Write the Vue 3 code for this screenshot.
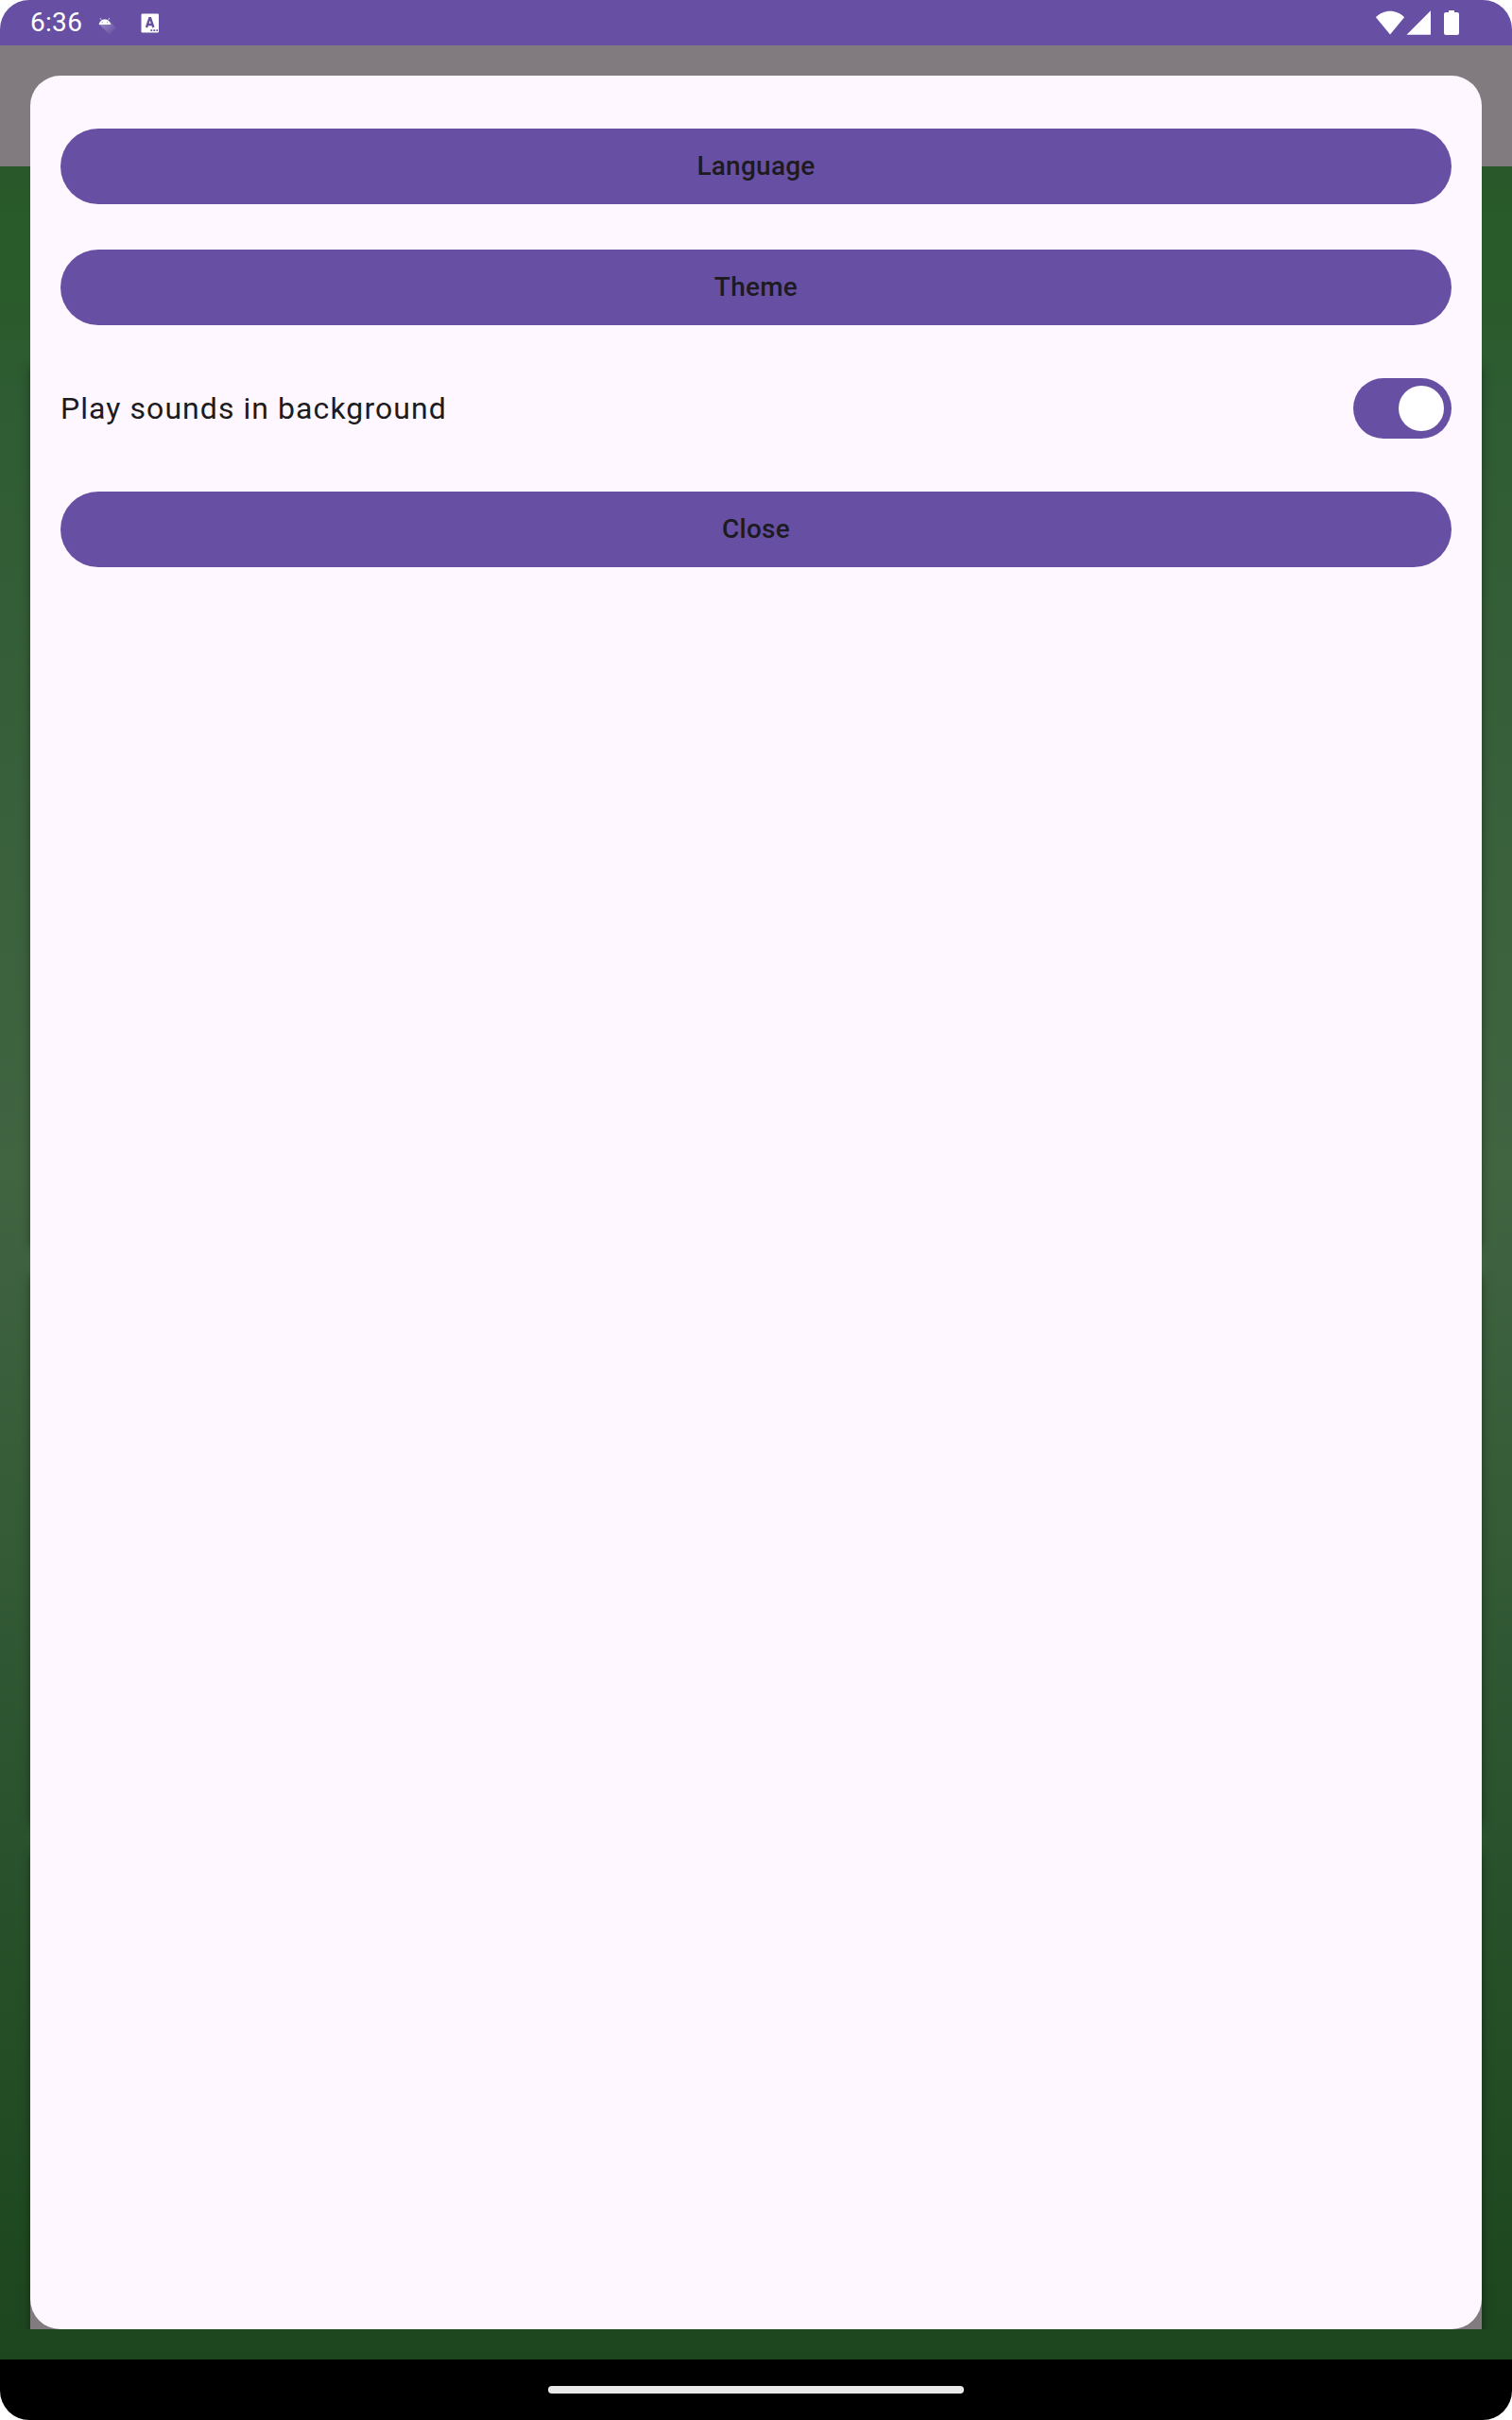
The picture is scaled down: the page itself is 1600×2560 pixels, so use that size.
<script setup>
import { ref } from 'vue'

const backgroundSounds = ref(true)
</script>

<template>
  <div class="device">
    <header class="status-bar">
      <span class="clock">6:36</span>
      <svg class="robot" viewBox="0 0 20 19" width="20" height="19">
        <defs>
          <linearGradient id="robotShade" x1="5" y1="7" x2="14" y2="17" gradientUnits="userSpaceOnUse">
            <stop offset="0" stop-color="#fff" stop-opacity=".3" />
            <stop offset="1" stop-color="#fff" stop-opacity=".04" />
          </linearGradient>
        </defs>
        <path d="M1 8H13L12 4L19 12L12 18.5Z" fill="url(#robotShade)" />
        <path d="M.7 8C.9 5 3.500 2.500 6.900 2.500S12.900 5 13.100 8Z" fill="#fff" />
        <path d="M3.400 3.400L2 1M10.400 3.400L11.800 1" stroke="#fff" stroke-width=".7" />
        <circle cx="4.200" cy="5.700" r=".5" fill="#6750a4" />
        <circle cx="9.600" cy="5.700" r=".5" fill="#6750a4" />
      </svg>
      <svg class="keyboard" viewBox="0 0 20 21" width="20" height="21">
        <rect x=".5" y=".5" width="18.500" height="20" rx="1.200" fill="#fff" />
        <path d="M6 15L9.300 5.200H10.100L13.400 15M7.200 12H12.200" fill="none" stroke="#6750a4" stroke-width="2.400" />
        <path d="M10.400 18.200H12.200M13.400 18.200H15.200M16.400 18.200H18" stroke="#6750a4" stroke-width="1.700" />
      </svg>
      <span class="spacer"></span>
      <svg viewBox="0 0 90 28" width="90" height="28">
        <path d="M.9 8.300C9 -.5 23 -.5 31.100 8.300L16 26.500Z" fill="#fff" />
        <path d="M33.500 26.700L59 1.200V26.700Z" fill="#fff" />
        <path d="M78 1H84V3H87Q89 3 89 5V25Q89 27 87 27H75Q73 27 73 25V5Q73 3 75 3H78Z" fill="#fff" />
      </svg>
    </header>

    <main class="backdrop">
      <div class="app-bar"></div>
      <div class="list">
        <div class="card first"></div>
        <div class="card second"></div>
        <div class="card third"></div>
      </div>
      <section class="dialog">
        <button class="pill" type="button">Language</button>
        <button class="pill" type="button">Theme</button>
        <div class="setting">
          <span>Play sounds in background</span>
          <button
            class="switch"
            :class="{ on: backgroundSounds }"
            type="button"
            role="switch"
            :aria-checked="backgroundSounds"
            @click="backgroundSounds = !backgroundSounds"
          >
            <span class="thumb"></span>
          </button>
        </div>
        <button class="pill" type="button">Close</button>
      </section>
    </main>

    <footer class="nav-bar"><span class="handle"></span></footer>
  </div>
</template>

<style>
body {
  margin: 0;
  background: #fff;
}
</style>

<style scoped>
.device {
  display: flex;
  flex-direction: column;
  width: 1600px;
  height: 2560px;
  overflow: hidden;
  border-radius: 31px;
  font-family: Roboto, "Liberation Sans", sans-serif;
  color: #1d1b20;
}
.status-bar {
  display: flex;
  flex: none;
  align-items: flex-start;
  box-sizing: border-box;
  height: 48px;
  padding: 0 55px 0 32px;
  background: #6750a4;
}
.status-bar svg {
  display: block;
  flex: none;
  margin-top: 10px;
}
.clock {
  width: 55px;
  font-size: 28px;
  letter-spacing: .3px;
  line-height: 48px;
  color: #fff;
}
.status-bar .robot {
  margin: 18px 0 0 17px;
}
.status-bar .keyboard {
  margin: 13.500px 0 0 25px;
}
.spacer {
  flex: 1;
}
.backdrop {
  position: relative;
  display: flex;
  flex: none;
  flex-direction: column;
  height: 2448px;
  background: linear-gradient(#29592a 128px, #295b2a 240px, #2f5c33 380px, #416441 1190px, #2c542f 1820px, #1f4920 2300px, #1d461e 2448px);
}
.app-bar {
  flex: none;
  height: 128px;
  background: #817b7f;
}
.list {
  display: flex;
  flex: none;
  flex-direction: column;
  gap: 32px;
  box-sizing: border-box;
  height: 2288px;
  padding: 208px 32px 0;
  overflow: hidden;
}
.card {
  flex: none;
  background: #817b7f;
  box-shadow: 0 4px 10px rgba(0, 0, 0, .34);
}
.first {
  height: 930px;
}
.second {
  height: 580px;
}
.third {
  height: 620px;
}
.dialog {
  position: absolute;
  inset: 32px;
  display: flex;
  flex-direction: column;
  gap: 48px;
  box-sizing: border-box;
  padding: 56px 32px;
  border-radius: 32px;
  background: #fef7ff;
}
.pill {
  flex: none;
  height: 80px;
  padding: 0;
  border: 0;
  border-radius: 40px;
  background: #6750a4;
  font: 500 28px/80px Roboto, "Liberation Sans", sans-serif;
  letter-spacing: .25px;
  color: #1d1b20;
}
.setting {
  display: flex;
  flex: none;
  align-items: center;
  justify-content: space-between;
  height: 80px;
  font-size: 32px;
  letter-spacing: 1.060px;
}
.switch {
  display: flex;
  align-items: center;
  box-sizing: border-box;
  width: 104px;
  height: 64px;
  padding: 8px;
  border: 0;
  border-radius: 32px;
  background: #79747e;
}
.switch.on {
  justify-content: flex-end;
  background: #6750a4;
}
.thumb {
  width: 48px;
  height: 48px;
  border-radius: 50%;
  background: #fff;
}
.nav-bar {
  display: flex;
  flex: none;
  align-items: center;
  justify-content: center;
  height: 64px;
  background: #000;
}
.handle {
  width: 440px;
  height: 8px;
  border-radius: 4px;
  background: #eaeaea;
}
</style>
